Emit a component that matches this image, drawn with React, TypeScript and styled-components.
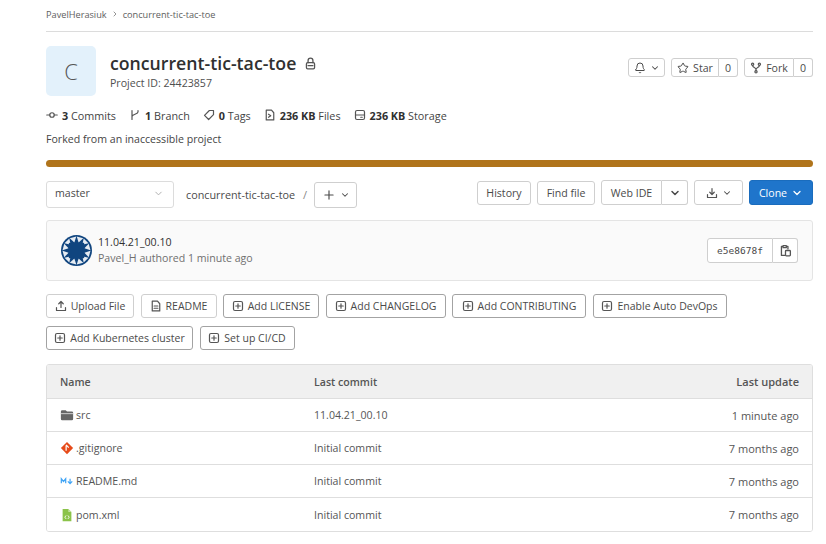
import { ReactNode } from "react";
import styled, { createGlobalStyle } from "styled-components";
import { ChevronDown, ChevronRight, Star, Plus, Bell } from "lucide-react";

const GlobalStyle = createGlobalStyle`
  html, body { margin: 0; padding: 0; background: #fff; overflow: hidden; }
  body { font-family: "Open Sans", "Noto Sans", "Liberation Sans", sans-serif; font-size: 10.6px; color: #303030; }
  * { box-sizing: border-box; }
`;

const Page = styled.div`
  width: 826px;
  height: 544px;
  padding: 0 13px 0 46px;
  overflow: hidden;
`;
const Breadcrumb = styled.div`
  height: 32px;
  padding-top: 8px;
  display: flex;
  align-items: flex-start;
  gap: 4px;
  border-bottom: 1px solid #dcdcdc;
  font-size: 9.2px;
  line-height: 13px;
  color: #5e5e5e;
`;
const ProjectHead = styled.div`
  margin-top: 14px;
  display: flex;
  justify-content: space-between;
`;
const ProjectInfo = styled.div`
  display: flex;
  gap: 14px;
`;
const Avatar = styled.div`
  width: 50px;
  height: 50px;
  border-radius: 5px;
  background: #e3f1fb;
  color: #555;
  font-size: 22px;
  font-weight: 300;
  display: flex;
  align-items: center;
  justify-content: center;
`;
const TitleBlock = styled.div`
  padding-top: 4px;
`;
const Title = styled.div`
  display: flex;
  align-items: center;
  gap: 8px;
  font-size: 17.7px;
  font-weight: 600;
  line-height: 26px;
  color: #303030;
`;
const ProjectId = styled.div`
  line-height: 15px;
  color: #4f4f4f;
`;
const HeadActions = styled.div`
  display: flex;
  gap: 6px;
  padding-top: 12px;
`;
const Button = styled.div<{ $h?: number; $w?: number; $primary?: boolean; $dark?: boolean }>`
  height: ${(p) => p.$h ?? 24}px;
  ${(p) => (p.$w ? `width: ${p.$w}px; padding: 0; justify-content: center;` : "padding: 0 8px;")}
  display: inline-flex;
  align-items: center;
  gap: 4px;
  white-space: nowrap;
  border-radius: 3px;
  color: ${(p) => (p.$primary ? "#fff" : "#4a4a4a")};
  background: ${(p) => (p.$primary ? "#1f75cb" : "#fff")};
  border: 1px solid ${(p) => (p.$primary ? "#1a6cbd" : p.$dark ? "#a3a3a3" : "#cfcfcf")};
`;
const Group = styled.div`
  display: inline-flex;
  & > div:first-child { border-radius: 3px 0 0 3px; }
  & > div:last-child { border-radius: 0 3px 3px 0; border-left: 0; }
`;
const Stats = styled.div`
  margin-top: 10px;
  display: flex;
  align-items: center;
  height: 18px;
  font-size: 10.8px;
  color: #444;
  b { font-weight: 700; color: #303030; }
`;
const Stat = styled.div`
  display: flex;
  align-items: center;
  gap: 4px;
  margin-right: 13px;
  white-space: nowrap;
`;
const Forked = styled.div`
  margin-top: 8px;
  line-height: 15px;
  color: #444;
`;
const LangBar = styled.div`
  margin-top: 13px;
  height: 7px;
  border-radius: 3.5px;
  background: #b0741b;
`;
const TreeBar = styled.div`
  margin-top: 13px;
  display: flex;
  align-items: flex-start;
  justify-content: space-between;
`;
const TreeLeft = styled.div`
  display: flex;
  align-items: center;
`;
const TreeRight = styled.div`
  display: flex;
  align-items: center;
  gap: 6px;
`;
const BranchSelect = styled.div`
  width: 128px;
  height: 27px;
  padding: 0 9px 2px 8px;
  display: flex;
  align-items: center;
  justify-content: space-between;
  border: 1px solid #dcdcdc;
  border-radius: 3px;
  color: #4a4a4a;
`;
const RepoCrumb = styled.div`
  margin-left: 12px;
  font-size: 10.8px;
  color: #4a4a4a;
`;
const Slash = styled.span`
  margin: 0 7px 0 8px;
  font-size: 11px;
  color: #888;
`;
const AddWrap = styled.div`
  margin-top: 2px;
  display: flex;
`;
const Commit = styled.div`
  margin-top: 12px;
  height: 61px;
  padding: 0 14px;
  display: flex;
  align-items: center;
  justify-content: space-between;
  background: #fafafa;
  border: 1px solid #e4e4e4;
  border-radius: 3px;
`;
const CommitLeft = styled.div`
  display: flex;
  align-items: center;
  gap: 6px;
`;
const CommitText = styled.div`
  padding-bottom: 2px;
`;
const CommitTitle = styled.div`
  line-height: 16px;
  font-weight: 500;
  color: #303030;
`;
const CommitMeta = styled.div`
  line-height: 16px;
  color: #707070;
`;
const Sha = styled.span`
  font-family: "DejaVu Sans Mono", "Liberation Mono", monospace;
  font-size: 9.5px;
`;
const Shortcuts = styled.div`
  margin-top: 13px;
  display: flex;
  flex-wrap: wrap;
  gap: 8px 6.5px;
  width: 700px;
  font-size: 10.5px;
`;
const FileTable = styled.div`
  margin-top: 14px;
  border: 1px solid #dedede;
  border-radius: 3px;
  overflow: hidden;
`;
const Row = styled.div<{ $head?: boolean }>`
  height: ${(p) => (p.$head ? 34 : 33)}px;
  display: grid;
  grid-template-columns: 254px 1fr 150px;
  align-items: center;
  padding: 0 13px;
  color: #555;
  background: ${(p) => (p.$head ? "#f0f0f0" : "#fff")};
  border-bottom: 1px solid #dedede;
  font-weight: ${(p) => (p.$head ? 600 : 400)};
  &:last-child { border-bottom: 0; }
`;
const NameCell = styled.div`
  display: flex;
  align-items: center;
  gap: 2px;
`;
const RightCell = styled.div`
  text-align: right;
  font-size: 11px;
`;

const Svg = ({ size = 12, children }: { size?: number; children: ReactNode }) => (
  <svg width={size} height={size} viewBox="0 0 16 16" fill="none" stroke="#555" strokeWidth={1.6} strokeLinecap="round" strokeLinejoin="round">
    {children}
  </svg>
);
const CommitIcon = () => <Svg><path d="M1 8h4M11 8h4" /><circle cx="8" cy="8" r="3" /></Svg>;
const BranchIcon = () => <Svg><path d="M4 2v12M12 2v2c0 3-8 3-8 6" /></Svg>;
const TagIcon = () => <Svg><path d="M8.500 2H14v5.500L7.500 14 2 8.500z" /></Svg>;
const FilesIcon = () => <Svg><path d="M3 1.500h7L13 5v9.500H3zM6 7l3 2-3 2" /></Svg>;
const StorageIcon = () => <Svg><rect x="2" y="2" width="12" height="12" rx="2" /><path d="M2 8h12M9 11h2" /></Svg>;
const UploadIcon = () => <Svg><path d="M2 10v4h12v-4M8 10V2M5 5l3-3 3 3" /></Svg>;
const DownloadIcon = () => <Svg><path d="M2 10v4h12v-4M8 2v8M5 7l3 3 3-3" /></Svg>;
const DocIcon = () => <Svg><path d="M3 1.500h7L13 5v9.500H3zM5.500 8h5M5.500 11h5" /></Svg>;
const AddIcon = () => <Svg><rect x="2" y="2" width="12" height="12" rx="2" /><path d="M8 5v6M5 8h6" /></Svg>;
const ClipboardIcon = () => <Svg size={13}><path d="M5 3H3v11h4M11 6V3H9M5 2h4v2.500H5z" /><rect x="8" y="8" width="6" height="6.500" rx="1" /></Svg>;
const LockIcon = () => <Svg size={13}><rect x="3" y="7" width="10" height="7.500" rx="1.500" /><path d="M5 7V4.500a3 3 0 0 1 6 0V7M5 10.500h6" /></Svg>;
const ForkIcon = () => (
  <Svg>
    <circle cx="3.500" cy="3" r="1.500" />
    <circle cx="12.500" cy="3" r="1.500" />
    <circle cx="8" cy="13" r="1.500" />
    <path d="M3.500 4.500c0 3 4.500 2.500 4.500 5.500v1.500M12.500 4.500c0 3-4.500 2.500-4.500 5.500" />
  </Svg>
);

const FolderIcon = () => (
  <svg width="14" height="14" viewBox="0 0 16 16"><path d="M1 4a1.500 1.500 0 0 1 1.500-1.500h4L8 4h5.500A1.500 1.500 0 0 1 15 5.500v7a1.500 1.500 0 0 1-1.500 1.500h-11A1.500 1.500 0 0 1 1 12.500z" fill="#666" /><rect x="1" y="6" width="14" height="1" fill="#ddd" /></svg>
);
const GitIcon = () => (
  <svg width="14" height="14" viewBox="0 0 16 16"><path d="M8 1l7 7-7 7-7-7z" fill="#e64a19" /><path d="M7 4.500l3 3M7 5v6" stroke="#fff" strokeWidth="1.400" /></svg>
);
const MarkdownIcon = () => (
  <svg width="14" height="14" viewBox="0 0 16 16" fill="none" stroke="#42a5f5" strokeWidth="1.400"><path d="M1.500 10.500v-5l2.500 3 2.500-3v5" /><path d="M11.500 5.500v4.500M9 8.500l2.500 2.500L14 8.500" /></svg>
);
const XmlIcon = () => (
  <svg width="14" height="14" viewBox="0 0 16 16"><path d="M3 1h6.500L13 4.500V15H3z" fill="#8bc34a" /><path d="M9.500 1v3.500H13z" fill="#c5e1a5" /><path d="M7 8.500L5.500 10.500 7 12.500M9 8.500l1.500 2L9 12.500" stroke="#fff" strokeWidth="1" fill="none" /></svg>
);
const CommitAvatar = () => (
  <svg width="31" height="31" viewBox="0 0 32 32">
    <circle cx="16" cy="16" r="16" fill="#10457f" />
    {[15, 45, 75, 105, 135, 165, 195, 225, 255, 285, 315, 345].map((a) => (
      <path key={a} d="M16 7.500l-3.500-5.500h7z" fill="#e6ecf3" transform={`rotate(${a} 16 16)`} />
    ))}
    <rect x="8" y="8" width="16" height="16" rx="1" fill="#10457f" />
  </svg>
);

const shortcuts: { label: string; icon: ReactNode; width: number; dark?: boolean }[] = [
  { label: "Upload File", icon: <UploadIcon />, width: 88 },
  { label: "README", icon: <DocIcon />, width: 76 },
  { label: "Add LICENSE", icon: <AddIcon />, width: 96, dark: true },
  { label: "Add CHANGELOG", icon: <AddIcon />, width: 120, dark: true },
  { label: "Add CONTRIBUTING", icon: <AddIcon />, width: 134, dark: true },
  { label: "Enable Auto DevOps", icon: <AddIcon />, width: 134, dark: true },
  { label: "Add Kubernetes cluster", icon: <AddIcon />, width: 147, dark: true },
  { label: "Set up CI/CD", icon: <AddIcon />, width: 95, dark: true },
];

const files = [
  { name: "src", icon: <FolderIcon />, commit: "11.04.21_00.10", time: "1 minute ago" },
  { name: ".gitignore", icon: <GitIcon />, commit: "Initial commit", time: "7 months ago" },
  { name: "README.md", icon: <MarkdownIcon />, commit: "Initial commit", time: "7 months ago" },
  { name: "pom.xml", icon: <XmlIcon />, commit: "Initial commit", time: "7 months ago" },
];

const App = () => {
  return (
    <Page>
      <GlobalStyle />
      <Breadcrumb>
        <span>PavelHerasiuk</span>
        <ChevronRight size={8} style={{ marginTop: 2 }} />
        <span>concurrent-tic-tac-toe</span>
      </Breadcrumb>
      <ProjectHead>
        <ProjectInfo>
          <Avatar>C</Avatar>
          <TitleBlock>
            <Title>
              concurrent-tic-tac-toe
              <LockIcon />
            </Title>
            <ProjectId>Project ID: 24423857</ProjectId>
          </TitleBlock>
        </ProjectInfo>
        <HeadActions>
          <Button $h={19} $w={37}>
            <Bell size={12} strokeWidth={2} /> <ChevronDown size={10} strokeWidth={2.5} />
          </Button>
          <Group>
            <Button $h={19} $w={48}><Star size={12} strokeWidth={2} /> Star</Button>
            <Button $h={19} $w={19}>0</Button>
          </Group>
          <Group>
            <Button $h={19} $w={50}><ForkIcon /> Fork</Button>
            <Button $h={19} $w={19}>0</Button>
          </Group>
        </HeadActions>
      </ProjectHead>
      <Stats>
        <Stat><CommitIcon /><span><b>3</b> Commits</span></Stat>
        <Stat><BranchIcon /><span><b>1</b> Branch</span></Stat>
        <Stat><TagIcon /><span><b>0</b> Tags</span></Stat>
        <Stat><FilesIcon /><span><b>236 KB</b> Files</span></Stat>
        <Stat><StorageIcon /><span><b>236 KB</b> Storage</span></Stat>
      </Stats>
      <Forked>Forked from an inaccessible project</Forked>
      <LangBar />
      <TreeBar>
        <TreeLeft>
          <BranchSelect>master <ChevronDown size={11} color="#aaa" /></BranchSelect>
          <RepoCrumb>concurrent-tic-tac-toe</RepoCrumb>
          <Slash>/</Slash>
          <AddWrap>
            <Button $h={26} $w={43}><Plus size={14} /> <ChevronDown size={10} strokeWidth={2.5} /></Button>
          </AddWrap>
        </TreeLeft>
        <TreeRight>
          <Button $w={54}>History</Button>
          <Button $w={58}>Find file</Button>
          <Group>
            <Button $h={25} $w={61}>Web IDE</Button>
            <Button $h={25} $w={26}><ChevronDown size={12} strokeWidth={3} /></Button>
          </Group>
          <Button $h={25} $w={49}><DownloadIcon /> <ChevronDown size={10} strokeWidth={2.5} /></Button>
          <Button $h={25} $w={64} $primary>Clone <ChevronDown size={12} strokeWidth={2.5} /></Button>
        </TreeRight>
      </TreeBar>
      <Commit>
        <CommitLeft>
          <CommitAvatar />
          <CommitText>
            <CommitTitle>11.04.21_00.10</CommitTitle>
            <CommitMeta>Pavel_H authored 1 minute ago</CommitMeta>
          </CommitText>
        </CommitLeft>
        <Group>
          <Button $h={25} $w={66}><Sha>e5e8678f</Sha></Button>
          <Button $h={25} $w={25}><ClipboardIcon /></Button>
        </Group>
      </Commit>
      <Shortcuts>
        {shortcuts.map((s) => (
          <Button key={s.label} $w={s.width} $dark={s.dark}>{s.icon}{s.label}</Button>
        ))}
      </Shortcuts>
      <FileTable>
        <Row $head>
          <span>Name</span>
          <span>Last commit</span>
          <RightCell>Last update</RightCell>
        </Row>
        {files.map((f) => (
          <Row key={f.name}>
            <NameCell>{f.icon}{f.name}</NameCell>
            <span>{f.commit}</span>
            <RightCell>{f.time}</RightCell>
          </Row>
        ))}
      </FileTable>
    </Page>
  );
};

export default App;
